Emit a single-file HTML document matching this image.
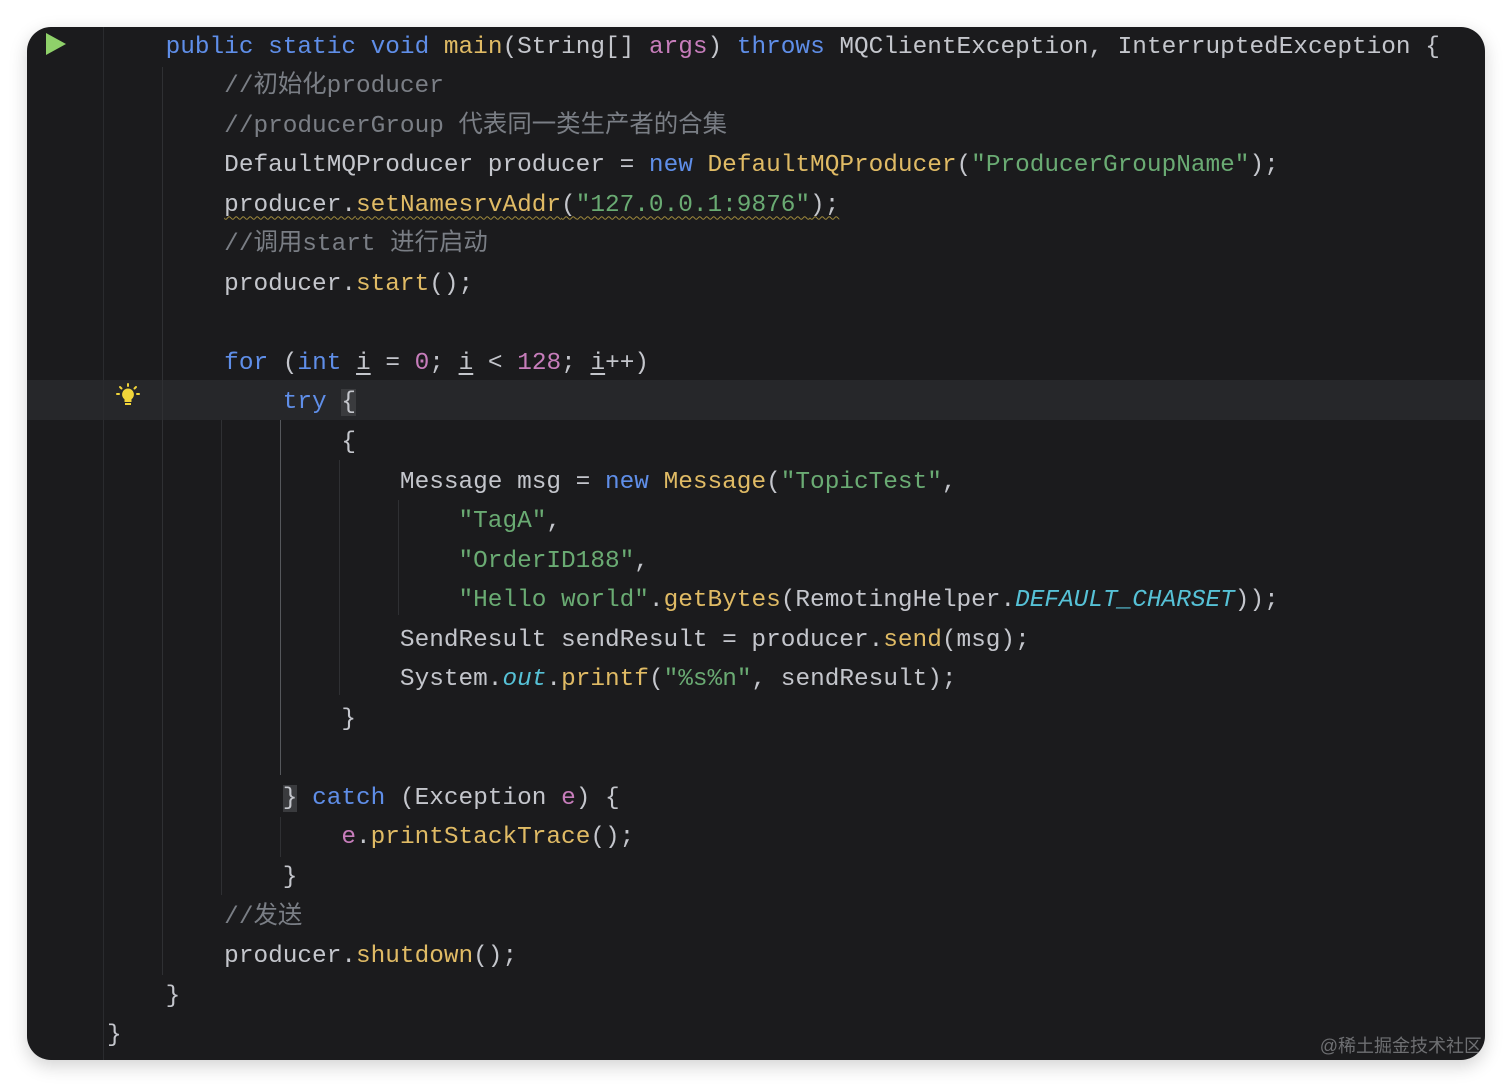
<!DOCTYPE html>
<html><head><meta charset="utf-8"><style>
html,body{margin:0;padding:0;background:#fff;width:1512px;height:1087px;overflow:hidden}
.panel{position:absolute;left:27px;top:27px;width:1458px;height:1033px;background:#1b1b1d;border-radius:24px;overflow:hidden;box-shadow:0 6px 18px rgba(0,0,0,.18)}
.cur{position:absolute;left:0;top:353px;width:1458px;height:40px;background:#26272a}
.g{position:absolute;width:1px;background:#2f3033}
.code{position:absolute;left:80px;top:0.5px;font-family:"Liberation Mono","Noto Sans CJK SC",monospace;font-size:24.42px;line-height:39.55px;color:#c4c6cc;white-space:pre}
.k{color:#5f8ee8}.m{color:#e0bb65}.s{color:#6aab73}.c{color:#7a7e85}.n{color:#c77dbb}.p{color:#c77dbb}.f{color:#56c1d6;font-style:italic}
.u{text-decoration:underline;text-underline-offset:4px}
.w{text-decoration:underline wavy #a08a3c;text-underline-offset:5px;text-decoration-thickness:1px}
.br{background:#3a3b3e}
.wm{position:absolute;right:3px;bottom:2px;font-family:"Liberation Sans","Noto Sans CJK SC",sans-serif;font-size:18px;color:#6e6f72}
</style></head><body>
<div class="panel">
<div class="cur"></div>
<div class="g" style="left:76px;top:0;height:1033px;background:#2a2b2e"></div>
<div class="g" style="left:135px;top:40px;height:908px"></div>
<div class="g" style="left:194px;top:393px;height:475px"></div>
<div class="g" style="left:253px;top:393px;height:355px;background:#55575b"></div>
<div class="g" style="left:253px;top:790px;height:40px"></div>
<div class="g" style="left:312px;top:433px;height:235px"></div>
<div class="g" style="left:371px;top:473px;height:115px"></div>
<svg style="position:absolute;left:17px;top:5px" width="24" height="24"><polygon points="2,1 22,12 2,23" fill="#8fd16a"/></svg>
<svg style="position:absolute;left:88px;top:356px" width="26" height="26" viewBox="0 0 26 26"><g stroke="#f0d43a" stroke-width="2" stroke-linecap="round"><line x1="13" y1="1" x2="13" y2="3"/><line x1="5" y1="4" x2="6.5" y2="5.5"/><line x1="21" y1="4" x2="19.5" y2="5.5"/><line x1="2" y1="11" x2="4" y2="11"/><line x1="22" y1="11" x2="24" y2="11"/></g><path d="M13 5.5a6 6 0 0 0-3.5 10.8V19h7v-2.7A6 6 0 0 0 13 5.5z" fill="#f0d43a"/><rect x="10" y="20" width="6" height="2" fill="#f0d43a"/></svg>
<div class="code">    <span class="k">public static void</span> <span class="m">main</span>(String[] <span class="p">args</span>) <span class="k">throws</span> MQClientException, InterruptedException {
        <span class="c">//初始化producer</span>
        <span class="c">//producerGroup 代表同一类生产者的合集</span>
        DefaultMQProducer producer = <span class="k">new</span> <span class="m">DefaultMQProducer</span>(<span class="s">"ProducerGroupName"</span>);
        <span class="w">producer.<span class="m">setNamesrvAddr</span>(<span class="s">"127.0.0.1:9876"</span>);</span>
        <span class="c">//调用start 进行启动</span>
        producer.<span class="m">start</span>();

        <span class="k">for</span> (<span class="k">int</span> <span class="u">i</span> = <span class="n">0</span>; <span class="u">i</span> &lt; <span class="n">128</span>; <span class="u">i</span>++)
            <span class="k">try</span> <span class="br">{</span>
                {
                    Message msg = <span class="k">new</span> <span class="m">Message</span>(<span class="s">"TopicTest"</span>,
                        <span class="s">"TagA"</span>,
                        <span class="s">"OrderID188"</span>,
                        <span class="s">"Hello world"</span>.<span class="m">getBytes</span>(RemotingHelper.<span class="f">DEFAULT_CHARSET</span>));
                    SendResult sendResult = producer.<span class="m">send</span>(msg);
                    System.<span class="f">out</span>.<span class="m">printf</span>(<span class="s">"%s%n"</span>, sendResult);
                }

            <span class="br">}</span> <span class="k">catch</span> (Exception <span class="p">e</span>) {
                <span class="p">e</span>.<span class="m">printStackTrace</span>();
            }
        <span class="c">//发送</span>
        producer.<span class="m">shutdown</span>();
    }
}</div>
<div class="wm">@稀土掘金技术社区</div>
</div>
</body></html>
